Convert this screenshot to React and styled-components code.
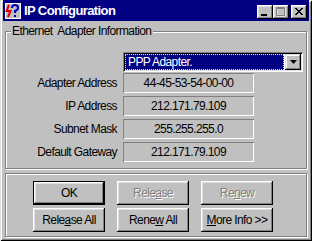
import React from 'react';
import styled, { createGlobalStyle, css } from 'styled-components';

const FONT = '"Liberation Sans", Arial, sans-serif';

const Global = createGlobalStyle`
  html, body { margin: 0; padding: 0; background: #c0c0c0; }
  * { box-sizing: border-box; }
`;

// window frame
const Window = styled.div`
  width: 312px;
  height: 241px;
  display: flex;
  flex-direction: column;
  padding: 0 3px 3px 3px;
  background: #c0c0c0;
  font-family: ${FONT};
  font-size: 12px;
  letter-spacing: -0.6px;
  color: #000;
  box-shadow: inset 1px 1px #dfdfdf, inset -1px -1px #000,
    inset 2px 2px #fff, inset -2px -2px #808080;
`;

const TitleBar = styled.div`
  height: 21px;
  display: flex;
  align-items: center;
  padding: 0 2px;
  background: #000080;
  color: #fff;
`;

const Title = styled.span`
  flex: 1;
  margin-left: 3px;
  font-weight: bold;
  font-size: 13px;
  letter-spacing: -0.6px;
`;

const CaptionButton = styled.div`
  width: 16px;
  height: 14px;
  margin-top: 3px;
  margin-left: ${(p) => p.$gap || 0}px;
  display: flex;
  align-items: center;
  justify-content: center;
  background: #c0c0c0;
  box-shadow: inset -1px -1px #000, inset 1px 1px #fff,
    inset -2px -2px #808080, inset 2px 2px #dfdfdf;
`;

// group boxes
const Group = styled.div`
  position: relative;
  margin: ${(p) => p.$top}px 2px 0 2px;
  height: ${(p) => p.$height}px;
  border: 1px solid #808080;
  box-shadow: inset 1px 1px #fff, 1px 1px #fff;
  padding: ${(p) => p.$pad};
`;

const Legend = styled.span`
  position: absolute;
  top: -9px;
  left: 5px;
  padding: 0 2px 0 1px;
  background: #c0c0c0;
  line-height: 16px;
  white-space: pre;
`;

const Combo = styled.div`
  width: 180px;
  height: 20px;
  margin-left: 117px;
  margin-bottom: 1px;
  display: flex;
  padding: 2px;
  background: #fff;
  box-shadow: inset 1px 1px #808080, inset -1px -1px #fff,
    inset 2px 2px #000, inset -2px -2px #dfdfdf;
`;

const Selected = styled.div`
  flex: 1;
  margin-right: 1px;
  background: #000080;
  color: #fff;
  outline: 1px dotted #ffff00;
  outline-offset: -1px;
  padding-left: 3px;
  line-height: 16px;
`;

const ComboArrow = styled.div`
  width: 16px;
  height: 16px;
  display: flex;
  align-items: center;
  justify-content: center;
  background: #c0c0c0;
  box-shadow: inset -1px -1px #000, inset 1px 1px #dfdfdf,
    inset -2px -2px #808080, inset 2px 2px #fff;
`;

const Rows = styled.div`
  display: grid;
  grid-template-columns: 111px 131px;
  column-gap: 6px;
  row-gap: 3px;
  align-items: center;
`;

const Label = styled.span`
  text-align: right;
  white-space: nowrap;
`;

const Field = styled.div`
  height: 20px;
  line-height: 20px;
  text-align: center;
  box-shadow: inset 1px 1px #808080, inset -1px -1px #fff;
`;

// buttons
const ButtonGrid = styled.div`
  display: grid;
  grid-template-columns: repeat(3, 72px);
  grid-auto-rows: 24px;
  column-gap: 12px;
  row-gap: 3px;
`;

const raised = css`
  box-shadow: inset -1px -1px #000, inset 1px 1px #fff,
    inset -2px -2px #808080, inset 2px 2px #dfdfdf;
`;

const Button = styled.div`
  display: flex;
  align-items: center;
  justify-content: center;
  white-space: pre;
  background: #c0c0c0;
  ${raised}
  ${(p) =>
    p.$default &&
    css`
      border: 1px solid #000;
    `}
  ${(p) =>
    p.$disabled &&
    css`
      color: #808080;
      text-shadow: 1px 1px #fff;
    `}
`;

const U = styled.span`
  text-decoration: underline;
`;

const AppIcon = () => (
  <svg width="16" height="16" viewBox="0 0 16 16">
    <rect x="0" y="0" width="16" height="16" fill="#c0c0c0" />
    <path d="M0.5 0.5H15.5V15.5H0.5Z" fill="none" stroke="#fff" strokeWidth="1" />
    <path d="M4 2L1.5 8H5.5L3 14" fill="none" stroke="#e00000" strokeWidth="2" />
    <path d="M7 5Q7 2 10 2Q13 2 13 5Q13 7 10 8V10" fill="none" stroke="#0000c0" strokeWidth="2" />
    <rect x="9" y="12" width="2" height="2" fill="#0000c0" />
  </svg>
);

const fields = [
  ['Adapter Address', '44-45-53-54-00-00'],
  ['IP Address', '212.171.79.109'],
  ['Subnet Mask', '255.255.255.0'],
  ['Default Gateway', '212.171.79.109'],
];

const App = () => (
  <>
    <Global />
    <Window>
      <TitleBar>
        <AppIcon />
        <Title>IP Configuration</Title>
        <CaptionButton>
          <svg width="16" height="14" viewBox="0 0 16 14">
            <rect x="4" y="9" width="6" height="2" fill="#000" />
          </svg>
        </CaptionButton>
        <CaptionButton>
          <svg width="16" height="14" viewBox="0 0 16 14">
            <path d="M4 3H12V11H4Z" fill="none" stroke="#fff" />
            <path d="M3.5 2.5H11.5V10.5H3.5Z" fill="none" stroke="#808080" />
            <rect x="3" y="3" width="9" height="1" fill="#808080" />
          </svg>
        </CaptionButton>
        <CaptionButton $gap={2}>
          <svg width="16" height="14" viewBox="0 0 16 14">
            <path d="M4 3L11 10M5 3L12 10M11 3L4 10M12 3L5 10" stroke="#000" strokeWidth="1" />
          </svg>
        </CaptionButton>
      </TitleBar>

      <Group $top={10} $height={138} $pad="20px 0 0 0">
        <Legend>Ethernet  Adapter Information</Legend>
        <Combo>
          <Selected>PPP Adapter.</Selected>
          <ComboArrow>
            <svg width="7" height="4" viewBox="0 0 7 4">
              <path d="M0 0H7L3.5 4Z" fill="#000" />
            </svg>
          </ComboArrow>
        </Combo>
        <Rows>
          {fields.map(([label, value]) => (
            <React.Fragment key={label}>
              <Label>{label}</Label>
              <Field>{value}</Field>
            </React.Fragment>
          ))}
        </Rows>
      </Group>

      <Group $top={4} $height={64} $pad="7px 0 0 27px">
        <ButtonGrid>
          <Button $default>OK</Button>
          <Button $disabled>
            Rele<U>a</U>se
          </Button>
          <Button $disabled>
            Re<U>n</U>ew
          </Button>
          <Button>
            Rele<U>a</U>se All
          </Button>
          <Button>
            Rene<U>w</U> All
          </Button>
          <Button>
            <U>M</U>ore Info &gt;&gt;
          </Button>
        </ButtonGrid>
      </Group>
    </Window>
  </>
);

export default App;
